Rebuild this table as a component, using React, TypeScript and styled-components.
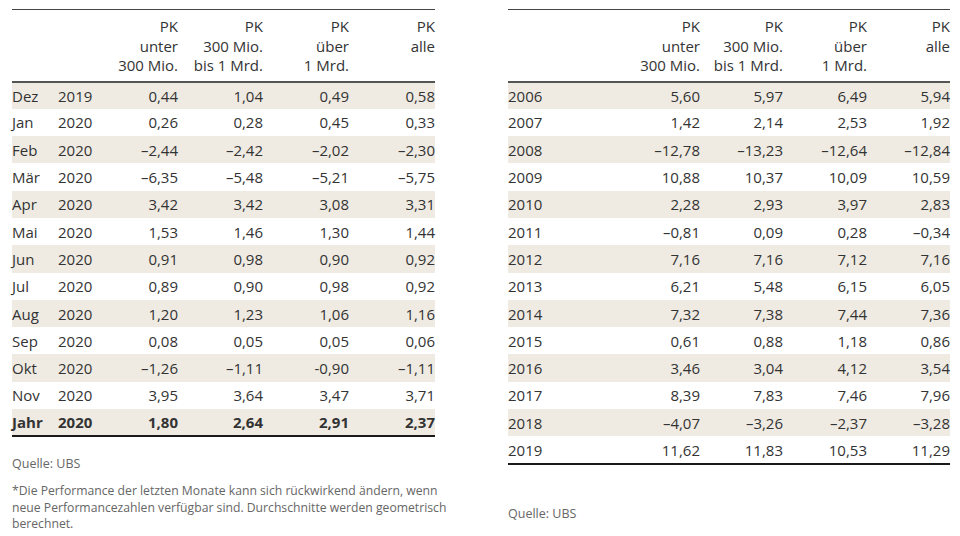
import React from 'react';
import styled, { createGlobalStyle } from 'styled-components';

type Row = { label: string; year?: string; values: string[]; bold?: boolean };

const monthly: Row[] = [
  { label: 'Dez', year: '2019', values: ['0,44', '1,04', '0,49', '0,58'] },
  { label: 'Jan', year: '2020', values: ['0,26', '0,28', '0,45', '0,33'] },
  { label: 'Feb', year: '2020', values: ['–2,44', '–2,42', '–2,02', '–2,30'] },
  { label: 'Mär', year: '2020', values: ['–6,35', '–5,48', '–5,21', '–5,75'] },
  { label: 'Apr', year: '2020', values: ['3,42', '3,42', '3,08', '3,31'] },
  { label: 'Mai', year: '2020', values: ['1,53', '1,46', '1,30', '1,44'] },
  { label: 'Jun', year: '2020', values: ['0,91', '0,98', '0,90', '0,92'] },
  { label: 'Jul', year: '2020', values: ['0,89', '0,90', '0,98', '0,92'] },
  { label: 'Aug', year: '2020', values: ['1,20', '1,23', '1,06', '1,16'] },
  { label: 'Sep', year: '2020', values: ['0,08', '0,05', '0,05', '0,06'] },
  { label: 'Okt', year: '2020', values: ['–1,26', '–1,11', '-0,90', '–1,11'] },
  { label: 'Nov', year: '2020', values: ['3,95', '3,64', '3,47', '3,71'] },
  { label: 'Jahr', year: '2020', values: ['1,80', '2,64', '2,91', '2,37'], bold: true },
];

const yearly: Row[] = [
  { label: '2006', values: ['5,60', '5,97', '6,49', '5,94'] },
  { label: '2007', values: ['1,42', '2,14', '2,53', '1,92'] },
  { label: '2008', values: ['–12,78', '–13,23', '–12,64', '–12,84'] },
  { label: '2009', values: ['10,88', '10,37', '10,09', '10,59'] },
  { label: '2010', values: ['2,28', '2,93', '3,97', '2,83'] },
  { label: '2011', values: ['–0,81', '0,09', '0,28', '–0,34'] },
  { label: '2012', values: ['7,16', '7,16', '7,12', '7,16'] },
  { label: '2013', values: ['6,21', '5,48', '6,15', '6,05'] },
  { label: '2014', values: ['7,32', '7,38', '7,44', '7,36'] },
  { label: '2015', values: ['0,61', '0,88', '1,18', '0,86'] },
  { label: '2016', values: ['3,46', '3,04', '4,12', '3,54'] },
  { label: '2017', values: ['8,39', '7,83', '7,46', '7,96'] },
  { label: '2018', values: ['–4,07', '–3,26', '–2,37', '–3,28'] },
  { label: '2019', values: ['11,62', '11,83', '10,53', '11,29'] },
];

const headers = [
  ['PK', 'unter', '300 Mio.'],
  ['PK', '300 Mio.', 'bis 1 Mrd.'],
  ['PK', 'über', '1 Mrd.'],
  ['PK', 'alle'],
];

// column widths, px
const monthlyCols = [46, 50, 70, 85, 86, 86];
const yearlyCols = [109, 83, 83, 84, 83];

const GlobalStyle = createGlobalStyle`
  body {
    margin: 0;
    background: #fff;
    font-family: 'Open Sans', 'Noto Sans', sans-serif;
    color: #333;
  }
`;

const Page = styled.div`
  display: flex;
  padding: 9px 10px 0 12px;
  gap: 73px;
  width: 960px;
  height: 536px;
  box-sizing: border-box;
`;

const Block = styled.section<{ $width: number }>`
  width: ${(p) => p.$width}px;
  display: flex;
  flex-direction: column;
`;

const Table = styled.table`
  width: 100%;
  border-collapse: collapse;
  table-layout: fixed;
  border-top: 1px solid #444;
  border-bottom: 2px solid #1a1a1a;
  font-size: 15px;
`;

const Col = styled.col<{ $w: number }>`
  width: ${(p) => p.$w}px;
`;

const HeadCell = styled.th`
  font-weight: normal;
  text-align: right;
  vertical-align: top;
  line-height: 19.5px;
  padding: 7px 0 5px;
  border-bottom: 2px solid #555;
  white-space: nowrap;
`;

const HeadLine = styled.div`
  display: block;
`;

const BodyRow = styled.tr<{ $shaded: boolean; $bold?: boolean }>`
  height: 27.3px;
  background: ${(p) => (p.$shaded ? '#efebe3' : '#fff')};
  font-weight: ${(p) => (p.$bold ? 700 : 400)};
`;

const Cell = styled.td<{ $align?: 'left' | 'right' }>`
  padding: 0;
  text-align: ${(p) => p.$align ?? 'right'};
  white-space: nowrap;
  vertical-align: middle;
`;

const Source = styled.p<{ $top: number }>`
  margin: ${(p) => p.$top}px 0 0;
  font-size: 12.5px;
  color: #666;
  line-height: 16px;
`;

const Note = styled.p`
  margin: 11px 0 0;
  font-size: 12.2px;
  line-height: 16.5px;
  color: #666;
  width: 456px;
`;

function Header({ lead }: { lead: number }) {
  return (
    <thead>
      <tr>
        {Array.from({ length: lead }).map((_, i) => (
          <HeadCell key={'e' + i} />
        ))}
        {headers.map((lines, i) => (
          <HeadCell key={i}>
            {lines.map((l, j) => (
              <HeadLine key={j}>{l}</HeadLine>
            ))}
          </HeadCell>
        ))}
      </tr>
    </thead>
  );
}

export default function App() {
  return (
    <>
      <GlobalStyle />
      <Page>
        <Block $width={423}>
          <Table>
            <colgroup>
              {monthlyCols.map((w, i) => (
                <Col key={i} $w={w} />
              ))}
            </colgroup>
            <Header lead={2} />
            <tbody>
              {monthly.map((r, i) => (
                <BodyRow key={r.label} $shaded={i % 2 === 0} $bold={r.bold}>
                  <Cell $align="left">{r.label}</Cell>
                  <Cell $align="left">{r.year}</Cell>
                  {r.values.map((v, j) => (
                    <Cell key={j}>{v}</Cell>
                  ))}
                </BodyRow>
              ))}
            </tbody>
          </Table>
          <Source $top={19}>Quelle: UBS</Source>
          <Note>
            *Die Performance der letzten Monate kann sich rückwirkend ändern, wenn neue
            Performancezahlen verfügbar sind. Durchschnitte werden geometrisch berechnet.
          </Note>
        </Block>
        <Block $width={442}>
          <Table>
            <colgroup>
              {yearlyCols.map((w, i) => (
                <Col key={i} $w={w} />
              ))}
            </colgroup>
            <Header lead={1} />
            <tbody>
              {yearly.map((r, i) => (
                <BodyRow key={r.label} $shaded={i % 2 === 0}>
                  <Cell $align="left">{r.label}</Cell>
                  {r.values.map((v, j) => (
                    <Cell key={j}>{v}</Cell>
                  ))}
                </BodyRow>
              ))}
            </tbody>
          </Table>
          <Source $top={41}>Quelle: UBS</Source>
        </Block>
      </Page>
    </>
  );
}
